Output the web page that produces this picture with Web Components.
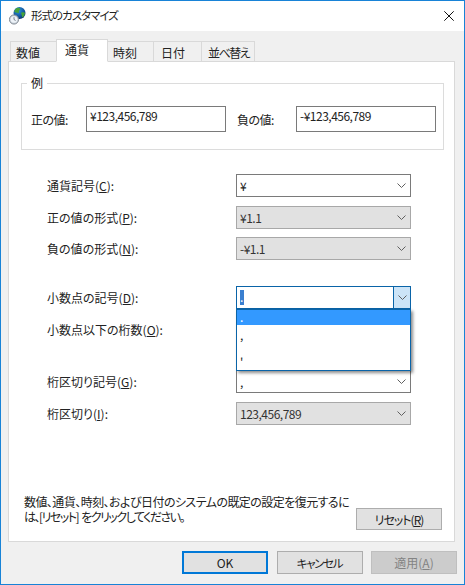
<!DOCTYPE html>
<html lang="ja">
<head>
<meta charset="utf-8">
<title>形式のカスタマイズ</title>
<style>
  html, body { margin: 0; padding: 0; background: #fff; }
  body {
    width: 465px;
    height: 585px;
    overflow: hidden;
    font: 12px "Noto Sans CJK JP", "Liberation Sans", sans-serif;
    font-feature-settings: "palt" 1;
    color: #1a1a1a;
  }
  u { text-underline-offset: 1px; }
</style>
</head>
<body>
<customize-dialog>
  <title-bar slot="title">形式のカスタマイズ</title-bar>

  <tab-strip slot="tabs">
    <tab-item style="width:47px;--pad:5px">数値</tab-item>
    <tab-item selected style="width:52px;--pad:8px">通貨</tab-item>
    <tab-item style="width:47px;--pad:5px">時刻</tab-item>
    <tab-item style="width:49px;--pad:7px">日付</tab-item>
    <tab-item style="width:54px;--pad:6px;letter-spacing:-1.5px">並べ替え</tab-item>
  </tab-strip>

  <sample-group>
    <text-field label="正の値:" lw="55" value="¥123,456,789"></text-field>
    <text-field label="負の値:" lw="59" value="-¥123,456,789"></text-field>
  </sample-group>

  <setting-row top="24"><span slot="label">通貨記号(<u>C</u>):</span><combo-box value="¥"></combo-box></setting-row>
  <setting-row top="9"><span slot="label">正の値の形式(<u>P</u>):</span><combo-box disabled value="¥1.1"></combo-box></setting-row>
  <setting-row top="8"><span slot="label">負の値の形式(<u>N</u>):</span><combo-box disabled value="-¥1.1"></combo-box></setting-row>
  <setting-row top="26">
    <span slot="label">小数点の記号(<u>D</u>):</span>
    <combo-box open value="." options=".|,|'"></combo-box>
  </setting-row>
  <setting-row top="9"><span slot="label">小数点以下の桁数(<u>O</u>):</span><combo-box value=""></combo-box></setting-row>
  <setting-row top="29"><span slot="label">桁区切り記号(<u>G</u>):</span><combo-box value=","></combo-box></setting-row>
  <setting-row top="9"><span slot="label">桁区切り(<u>I</u>):</span><combo-box disabled value="123,456,789"></combo-box></setting-row>

  <reset-note slot="note">
    数値、通貨、時刻、および日付のシステムの既定の設定を復元するには、[リセット] をクリックしてください。
    <dlg-button slot="action" style="letter-spacing:-1px">リセット(<u>R</u>)</dlg-button>
  </reset-note>

  <dlg-button slot="footer" default>OK</dlg-button>
  <dlg-button slot="footer" style="font-size:11.5px;letter-spacing:-1.3px">キャンセル</dlg-button>
  <dlg-button slot="footer" disabled>適用(<u>A</u>)</dlg-button>
</customize-dialog>

<script>
// small helper, every component is just a shadow root with its own style
function shadow(el, html) {
  el.attachShadow({ mode: 'open' }).innerHTML = html;
  return el.shadowRoot;
}

class CustomizeDialog extends HTMLElement {
  constructor() {
    super();
    shadow(this, `
      <style>
        :host {
          display: flex;
          flex-direction: column;
          box-sizing: border-box;
          width: 465px;
          height: 585px;
          border: 1px solid #1883d7;
          background: #f0f0f0;
        }
        .panel {
          box-sizing: border-box;
          width: 447px;
          height: 481px;
          margin-left: 7px;
          padding: 21px 9px 0 12px;
          border: 1px solid #d9d9d9;
          background: #fff;
          display: flex;
          flex-direction: column;
        }
        .rows { flex: 1; }
        footer {
          display: flex;
          justify-content: flex-end;
          gap: 8.5px;
          margin: 9px 7px 0 0;
        }
      </style>
      <slot name="title"></slot>
      <slot name="tabs"></slot>
      <div class="panel">
        <div class="rows"><slot></slot></div>
        <slot name="note"></slot>
      </div>
      <footer><slot name="footer"></slot></footer>
    `);
  }
}

class TitleBar extends HTMLElement {
  constructor() {
    super();
    shadow(this, `
      <style>
        :host {
          display: flex;
          align-items: center;
          height: 30px;
          background: #fff;
          font-size: 11.5px;
          letter-spacing: -1px;
          color: #222;
        }
        .icon { margin: 0 5px 0 8px; flex: none; }
        .text { flex: 1; padding-bottom: 2px; }
        .close { margin-right: 10px; flex: none; }
      </style>
      <svg class="icon" width="17" height="18" viewBox="0 0 17 18">
        <defs>
          <radialGradient id="sea" cx=".4" cy=".3" r=".8">
            <stop offset="0" stop-color="#2f96e0"/><stop offset=".65" stop-color="#0f5198"/><stop offset="1" stop-color="#0a2a5e"/>
          </radialGradient>
        </defs>
        <circle cx="10.500" cy="6" r="6" fill="url(#sea)"/>
        <path d="M7 1.500c1.600-1 3.400-.8 4.200.2.5.8-.6 1.400-1.200 2-.5.6.5 1.500-.4 2.200-.9.6-1.600-.4-2.500-.4-.9 0-1.900-.4-1.700-1.300.2-1 .8-2 1.600-2.700zM12.500 5.500c1-.5 2.800-.4 3.500.2-.1 1.700-1 3.600-2.500 4.700-.7-.8-.5-1.900-1-2.800-.3-.7-.6-1.600 0-2.100z" fill="#46a33a"/>
        <circle cx="5" cy="12.500" r="4.600" fill="#c6ced7" stroke="#7d858e" stroke-width=".9"/>
        <circle cx="5" cy="12.500" r="3.300" fill="#eef3f8"/>
        <path d="M5 10.200v2.300l1.600 1" fill="none" stroke="#5c6670" stroke-width=".8"/>
      </svg>
      <span class="text"><slot></slot></span>
      <svg class="close" width="10" height="10" viewBox="0 0 10 10">
        <path d="M.3.300l9.400 9.400M9.700.300L.3 9.700" stroke="#111" stroke-width="1" fill="none"/>
      </svg>
    `);
  }
}

class TabStrip extends HTMLElement {
  constructor() {
    super();
    shadow(this, `
      <style>
        :host {
          display: flex;
          align-items: flex-end;
          height: 31px;
          padding-left: 10px;
          margin-bottom: -1px;
          position: relative;
          z-index: 1;
        }
      </style>
      <slot></slot>
    `);
  }
}

class TabItem extends HTMLElement {
  constructor() {
    super();
    shadow(this, `
      <style>
        :host {
          display: flex;
          align-items: center;
          box-sizing: border-box;
          height: 21px;
          margin-left: -1px;
          border: 1px solid #d9d9d9;
          background: #f0f0f0;
          font-size: 12px;
          color: #222;
          padding: 1px 0 0 var(--pad, 6px);
          white-space: nowrap;
        }
        :host([selected]) {
          height: 23px;
          background: #fff;
          border-bottom-color: #fff;
          padding: 0 0 3px var(--pad, 6px);
          position: relative;
          z-index: 1;
        }
      </style>
      <slot></slot>
    `);
  }
}

class SampleGroup extends HTMLElement {
  constructor() {
    super();
    shadow(this, `
      <style>
        :host { display: block; width: 423px; }
        fieldset {
          box-sizing: border-box;
          height: 74px;
          margin: -7px 0 0;
          padding: 0 7px 0 9px;
          border: 1px solid #dcdcdc;
        }
        legend { padding: 0 4px; margin-left: -4px; font-size: 12px; line-height: 14px; }
        .fields { display: flex; gap: 11px; margin-top: 16px; }
      </style>
      <fieldset>
        <legend>例</legend>
        <div class="fields"><slot></slot></div>
      </fieldset>
    `);
  }
}

class TextField extends HTMLElement {
  constructor() {
    super();
    shadow(this, `
      <style>
        :host {
          display: flex;
          align-items: center;
          height: 26px;
          font-size: 12px;
          letter-spacing: -.5px;
          color: #222;
        }
        label { flex: none; }
        .box {
          box-sizing: border-box;
          width: 140px;
          height: 26px;
          flex: none;
          border: 1px solid #7a7a7a;
          padding: 2px 0 0 3px;
          line-height: 14px;
        }
      </style>
      <label></label><div class="box"></div>
    `);
  }
  connectedCallback() {
    const label = this.shadowRoot.querySelector('label');
    label.textContent = this.getAttribute('label');
    label.style.width = this.getAttribute('lw') + 'px';
    this.shadowRoot.querySelector('.box').textContent = this.getAttribute('value');
  }
}

class SettingRow extends HTMLElement {
  constructor() {
    super();
    shadow(this, `
      <style>
        :host {
          display: flex;
          align-items: center;
          height: 23px;
          padding-left: 26px;
          font-size: 12px;
        }
        .label { width: 189px; flex: none; color: #222; }
      </style>
      <div class="label"><slot name="label"></slot></div>
      <slot></slot>
    `);
  }
  connectedCallback() {
    this.style.marginTop = this.getAttribute('top') + 'px';
  }
}

class ComboBox extends HTMLElement {
  constructor() {
    super();
    shadow(this, `
      <style>
        :host {
          display: block;
          position: relative;
          box-sizing: border-box;
          width: 175px;
          height: 23px;
          border: 1px solid #7a7a7a;
          background: #fff;
          color: #222;
          font-size: 12px;
          letter-spacing: -.5px;
        }
        :host([disabled]) {
          border-color: #a8a8a8;
          background: #e1e1e1;
          color: #333;
        }
        :host([open]) { border-color: #0a64a8; z-index: 5; }
        .row { display: flex; align-items: center; height: 21px; }
        .val { flex: 1; padding-left: 3px; line-height: 14px; }
        .sel { background: #3a7fd0; color: #fff; display: inline-block; min-width: 4px; height: 15px; }
        .arrow {
          box-sizing: border-box;
          width: 17px;
          height: 21px;
          flex: none;
          display: flex;
          align-items: center;
          justify-content: center;
        }
        :host([open]) .arrow { background: #cce4f7; border-left: 1px solid #0a64a8; }
        .list {
          position: absolute;
          left: -1px;
          top: 22px;
          box-sizing: border-box;
          width: 175px;
          height: 62px;
          border: 1px solid #0a64a8;
          background: #fff;
          box-shadow: 2px 2px 3px rgba(0, 0, 0, .45);
        }
        .item { height: 22px; line-height: 14px; padding: 3px 0 0 3px; box-sizing: border-box; }
        .item.on { height: 15px; padding-top: 0; background: #3399ff; color: #fff; }
        .item:last-child { padding-top: 9px; }
      </style>
      <div class="row">
        <div class="val"></div>
        <div class="arrow">
          <svg width="9" height="5" viewBox="0 0 9 5"><path d="M.5.500l4 4 4-4" fill="none" stroke="#606060" stroke-width="1"/></svg>
        </div>
      </div>
    `);
  }
  connectedCallback() {
    const root = this.shadowRoot;
    const val = root.querySelector('.val');
    if (this.hasAttribute('open')) {
      const sel = document.createElement('span');
      sel.className = 'sel';
      sel.textContent = this.getAttribute('value');
      val.appendChild(sel);
      const list = document.createElement('div');
      list.className = 'list';
      this.getAttribute('options').split('|').forEach((text, i) => {
        const item = document.createElement('div');
        item.className = i === 0 ? 'item on' : 'item';
        item.textContent = text;
        list.appendChild(item);
      });
      root.appendChild(list);
    } else {
      val.textContent = this.getAttribute('value');
    }
  }
}

class ResetNote extends HTMLElement {
  constructor() {
    super();
    shadow(this, `
      <style>
        :host {
          display: flex;
          align-items: flex-end;
          margin: 0 0 11px;
          padding-left: 3px;
          font-size: 12px;
          color: #222;
        }
        .col { width: 332px; flex: none; }
        /* first line is set a little wider than the second, as in the original */
        .text {
          width: 329px;
          line-height: 15px;
          padding-bottom: 6px;
          letter-spacing: -1.5px;
          word-spacing: 2px;
        }
        .text::first-line { letter-spacing: -.55px; }
        ::slotted(dlg-button) { height: 22px; }
      </style>
      <div class="col"><div class="text"><slot></slot></div></div>
      <div class="action"><slot name="action"></slot></div>
    `);
  }
}

class DlgButton extends HTMLElement {
  constructor() {
    super();
    shadow(this, `
      <style>
        :host {
          display: flex;
          align-items: center;
          justify-content: center;
          box-sizing: border-box;
          width: 86px;
          height: 23px;
          border: 1px solid #adadad;
          background: #e1e1e1;
          color: #222;
          font-size: 12px;
        }
        :host([default]) { border: 2px solid #0078d7; }
        :host([disabled]) { background: #cccccc; border-color: #bfbfbf; color: #838383; }
      </style>
      <slot></slot>
    `);
  }
}

customElements.define('customize-dialog', CustomizeDialog);
customElements.define('title-bar', TitleBar);
customElements.define('tab-strip', TabStrip);
customElements.define('tab-item', TabItem);
customElements.define('sample-group', SampleGroup);
customElements.define('text-field', TextField);
customElements.define('setting-row', SettingRow);
customElements.define('combo-box', ComboBox);
customElements.define('reset-note', ResetNote);
customElements.define('dlg-button', DlgButton);
</script>
</body>
</html>
